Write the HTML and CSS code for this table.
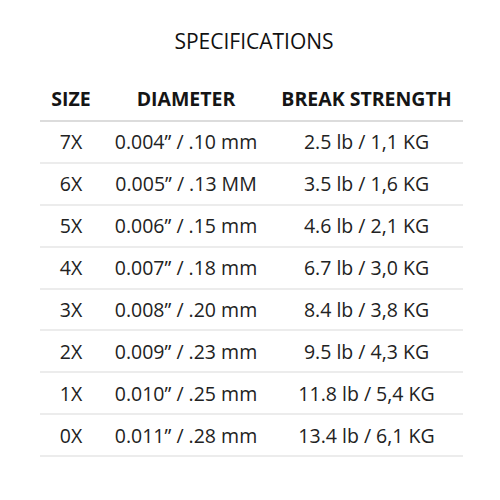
FILE: index.html
```html
<!DOCTYPE html>
<html>
<head>
<meta charset="utf-8">
<link rel="stylesheet" href="styles.css">
</head>
<body>
<div class="page">
  <h1 class="title">SPECIFICATIONS</h1>
  <table class="specs">
    <colgroup>
      <col class="c-size">
      <col class="c-diam">
      <col class="c-break">
    </colgroup>
    <thead>
      <tr><th>SIZE</th><th>DIAMETER</th><th>BREAK STRENGTH</th></tr>
    </thead>
    <tbody>
      <tr><td>7X</td><td>0.004” / .10 mm</td><td>2.5 lb / 1,1 KG</td></tr>
      <tr><td>6X</td><td>0.005” / .13 MM</td><td>3.5 lb / 1,6 KG</td></tr>
      <tr><td>5X</td><td>0.006” / .15 mm</td><td>4.6 lb / 2,1 KG</td></tr>
      <tr><td>4X</td><td>0.007” / .18 mm</td><td>6.7 lb / 3,0 KG</td></tr>
      <tr><td>3X</td><td>0.008” / .20 mm</td><td>8.4 lb / 3,8 KG</td></tr>
      <tr><td>2X</td><td>0.009” / .23 mm</td><td>9.5 lb / 4,3 KG</td></tr>
      <tr><td>1X</td><td>0.010” / .25 mm</td><td>11.8 lb / 5,4 KG</td></tr>
      <tr><td>0X</td><td>0.011” / .28 mm</td><td>13.4 lb / 6,1 KG</td></tr>
    </tbody>
  </table>
</div>
</body>
</html>
```
FILE: styles.css
```css
html, body {
  margin: 0;
  padding: 0;
  background: #ffffff;
}
body {
  font-family: "Open Sans", "Liberation Sans", sans-serif;
  color: #1a1a1a;
}
.page {
  width: 500px;
  height: 500px;
  padding-top: 26px;
  box-sizing: border-box;
}
.title {
  margin: 0 0 0 8px;
  text-align: center;
  font-size: 21px;
  font-weight: 400;
  line-height: 30px;
  color: #111;
}
.specs {
  margin: 30px 0 0 40px;
  width: 423px;
  border-collapse: collapse;
  table-layout: fixed;
}
.c-size { width: 62px; }
.c-diam { width: 168px; }
.c-break { width: 193px; }
.specs th {
  font-size: 19.5px;
  font-weight: 700;
  line-height: 26px;
  padding: 0 0 8px;
  text-align: center;
  color: #151515;
  border-bottom: 2px solid #dcdcdc;
}
.specs td {
  box-sizing: border-box;
  font-size: 19.5px;
  font-weight: 400;
  line-height: 26px;
  height: 41.9px;
  padding: 1px 0 0;
  text-align: center;
  vertical-align: middle;
  color: #222;
  border-bottom: 2px solid #ececec;
}
```
